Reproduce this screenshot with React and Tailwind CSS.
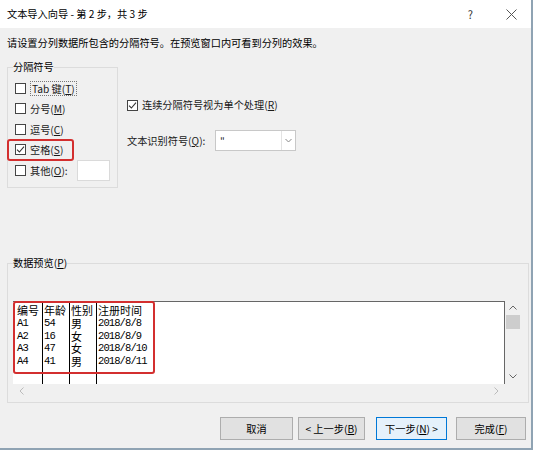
import React from 'react';

const ui = { fontFamily: '"Noto Sans CJK SC", "Noto Sans", sans-serif' };
const mono = { fontFamily: '"Liberation Mono", "Noto Sans CJK SC", monospace' };

function Box({ checked }) {
    return (
        <span className="w-[11px] h-[11px] shrink-0 border border-[#444] bg-white flex items-center justify-center">
            {checked && (
                <svg width="9" height="9" viewBox="0 0 9 9">
                    <path d="M1 4.6 L3.4 7 L8 1.6" fill="none" stroke="#333" strokeWidth="1.1" />
                </svg>
            )}
        </span>
    );
}

function Check({ checked, children, focus }) {
    return (
        <div className="h-[20.5px] flex items-center gap-[4px] whitespace-nowrap">
            <Box checked={checked} />
            <span className={focus ? 'px-[1px] border border-dotted border-[#777] leading-[13px]' : 'leading-[13px]'}>{children}</span>
        </div>
    );
}

// preview columns: header plus four data lines each
const columns = [
    { w: 'w-[30px] pl-[4px]', head: '编号', data: ['A1', 'A2', 'A3', 'A4'] },
    { w: 'w-[27px] pl-[1px]', head: '年龄', data: ['54', '16', '47', '41'] },
    { w: 'w-[27px] pl-[1px]', head: '性别', data: ['男', '女', '女', '男'], cjk: true },
];
const last = { head: '注册时间', data: ['2018/8/8', '2018/8/9', '2018/8/10', '2018/8/11'] };

function Column({ col }) {
    return (
        <>
            <div className="text-[11px] leading-[12.8px] text-black whitespace-nowrap" style={ui}>{col.head}</div>
            {col.cjk ? (
                <div className="text-[11px] leading-[12.8px] text-black whitespace-pre-line" style={ui}>{col.data.join('\n')}</div>
            ) : (
                <div className="text-[10.5px] leading-[12.8px] tracking-[-0.9px] text-black whitespace-pre-line" style={mono}>{col.data.join('\n')}</div>
            )}
        </>
    );
}

function Button({ children, primary, w }) {
    return (
        <button
            className={
                primary
                    ? `${w} h-[23px] bg-[#e5f1fb] border border-[#0078d7] text-[10.2px] text-black flex items-center justify-center`
                    : `${w} h-[23px] bg-[#e1e1e1] border border-[#adadad] text-[10.2px] text-black flex items-center justify-center`
            }
        >
            {children}
        </button>
    );
}

export default function App() {
    return (
        <div className="w-[536px] h-[452px] bg-white overflow-hidden text-[10.2px] text-[#1a1a1a]" style={ui}>
            <div className="w-[533px] h-[450px] border-r-2 border-b-2 border-[#8fa3b3] flex flex-col">
                {/* title bar */}
                <div className="h-[28px] bg-white flex items-center pl-[7px] pr-[14px]">
                    <span className="flex-1 text-[10.2px] text-black">文本导入向导 - 第 2 步，共 3 步</span>
                    <span className="text-[11px] text-[#333] mr-[33px]">?</span>
                    <svg width="11" height="11" viewBox="0 0 11 11">
                        <path d="M0.5 0.5 L10.5 10.5 M10.5 0.5 L0.5 10.5" stroke="#555" strokeWidth="1" />
                    </svg>
                </div>

                <div className="flex-1 bg-[#f0f0f0] flex flex-col pl-[7px] pr-[4px]">
                    <div className="h-[28px] flex items-center pt-[1px] text-black">
                        请设置分列数据所包含的分隔符号。在预览窗口内可看到分列的效果。
                    </div>

                    {/* delimiter options */}
                    <div className="flex mt-[3px]">
                        <fieldset className="w-[111px] h-[129px] border border-[#dcdcdc] px-[7px] pt-[3px]">
                            <legend className="px-[0px] -ml-[2px] leading-[16px] text-black">分隔符号</legend>
                            <Check focus>Tab 键(<u>T</u>)</Check>
                            <Check>分号(<u>M</u>)</Check>
                            <Check>逗号(<u>C</u>)</Check>
                            <div className="relative">
                                <Check checked>空格(<u>S</u>)</Check>
                                <span className="absolute -left-[8px] top-[-1px] w-[67px] h-[22px] border-2 border-[#d32f2f] rounded-[3px]" />
                            </div>
                            <div className="h-[20.5px] flex items-center gap-[4px] whitespace-nowrap">
                                <Box />
                                <span className="leading-[13px]">其他(<u>O</u>):</span>
                                <span className="ml-[5px] w-[33px] h-[21px] shrink-0 bg-white border border-[#dadada]" />
                            </div>
                        </fieldset>

                        <div className="ml-[9px] flex flex-col pt-[36px]">
                            <div className="h-[20px] flex items-center gap-[4px]">
                                <Box checked />
                                <span>连续分隔符号视为单个处理(<u>R</u>)</span>
                            </div>
                            <div className="mt-[15px] h-[21px] flex items-center">
                                <span className="w-[88px]">文本识别符号(<u>Q</u>):</span>
                                <div className="w-[81px] h-[21px] bg-white border border-[#c8c8c8] flex items-center">
                                    <span className="flex-1 pl-[4px] text-[10px] leading-[10px]">"</span>
                                    <span className="w-[14px] h-full border-l border-[#e3e3e3] flex items-center justify-center">
                                        <svg width="7" height="5" viewBox="0 0 7 5">
                                            <path d="M0.5 1 L3.5 4 L6.5 1" fill="none" stroke="#888" strokeWidth="1" />
                                        </svg>
                                    </span>
                                </div>
                            </div>
                        </div>
                    </div>

                    {/* preview */}
                    <fieldset className="mt-[67px] w-[522px] h-[148px] border border-[#dcdcdc] px-[5px]">
                        <legend className="leading-[16px] text-black">数据预览(<u>P</u>)</legend>
                        <div className="mt-[30px] flex">
                            <div className="relative w-[492px] h-[83px] bg-white border-t border-r border-[#666] flex">
                                {columns.map((c) => (
                                    <div key={c.head} className={`${c.w} h-full border-r border-black pt-[2px]`}>
                                        <Column col={c} />
                                    </div>
                                ))}
                                <div className="flex-1 pl-[1px] pt-[2px]">
                                    <Column col={last} />
                                </div>
                                <span className="absolute left-0 top-[-1px] w-[142px] h-[73px] border-2 border-[#d32f2f] rounded-[3px]" />
                            </div>
                            <div className="w-[15px] h-[83px] flex flex-col items-center">
                                <svg className="mt-[4px]" width="8" height="5" viewBox="0 0 8 5">
                                    <path d="M0.5 4.5 L4 1 L7.5 4.5" fill="none" stroke="#666" strokeWidth="1" />
                                </svg>
                                <span className="mt-[5px] w-[14px] h-[14px] bg-[#cdcdcd]" />
                                <span className="flex-1" />
                                <svg className="mb-[5px]" width="8" height="5" viewBox="0 0 8 5">
                                    <path d="M0.5 0.5 L4 4 L7.5 0.5" fill="none" stroke="#666" strokeWidth="1" />
                                </svg>
                            </div>
                        </div>
                        <div className="w-[492px] h-[14px] flex items-center justify-between px-[6px]">
                            <svg width="5" height="8" viewBox="0 0 5 8">
                                <path d="M4.5 0.5 L1 4 L4.5 7.5" fill="none" stroke="#bbb" strokeWidth="1" />
                            </svg>
                            <svg width="5" height="8" viewBox="0 0 5 8">
                                <path d="M0.5 0.5 L4 4 L0.5 7.5" fill="none" stroke="#bbb" strokeWidth="1" />
                            </svg>
                        </div>
                    </fieldset>

                    {/* wizard buttons */}
                    <div className="mt-[14px] flex justify-end pr-[1px]">
                        <Button w="w-[73px]">取消</Button>
                        <div className="w-[5px]" />
                        <Button w="w-[67px]">&lt; 上一步(<u>B</u>)</Button>
                        <div className="w-[11px]" />
                        <Button w="w-[71px]" primary>下一步(<u>N</u>) &gt;</Button>
                        <div className="w-[9px]" />
                        <Button w="w-[70px]">完成(<u>F</u>)</Button>
                    </div>
                </div>
            </div>
        </div>
    );
}
